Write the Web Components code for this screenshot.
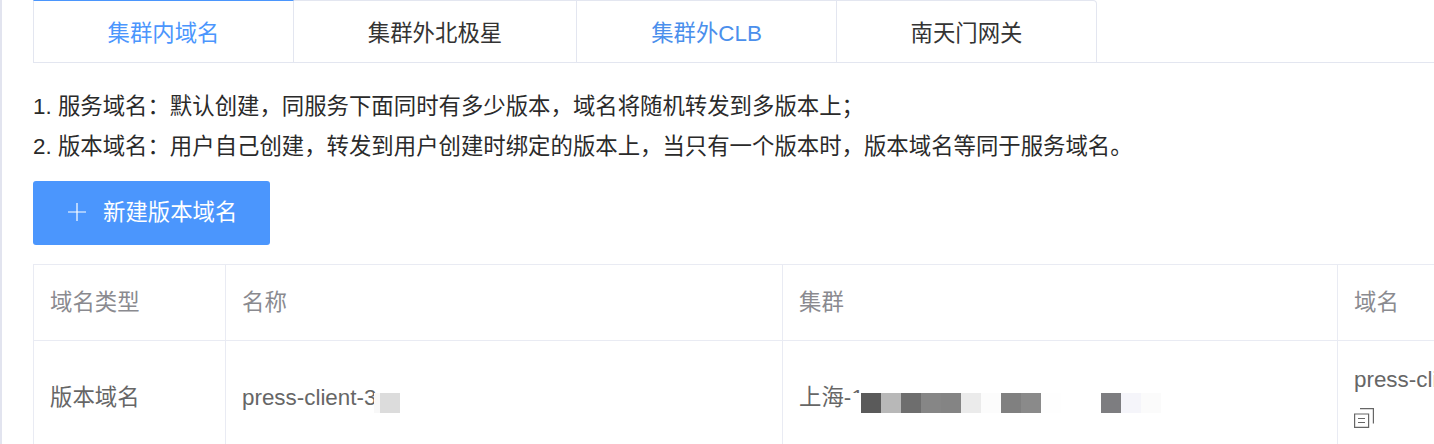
<!doctype html>
<html>
    <head>
        <title>版本域名</title>
        <style>
        html, body {
            margin: 0;
            height: 444px;
            overflow: hidden;
            background: #fff;
            font-family: "Liberation Sans", "Noto Sans CJK SC", sans-serif;
            color: #333;
        }
        </style>
    </head>
    <body>
        <domain-page>
            <domain-tabs>
                <tab-item active style="--w: 261px">集群内域名</tab-item>
                <tab-item style="--w: 283px">集群外北极星</tab-item>
                <tab-item blue style="--w: 260px">集群外CLB</tab-item>
                <tab-item style="--w: 260px">南天门网关</tab-item>
            </domain-tabs>
            <note-list>
                <div>1. 服务域名：默认创建，同服务下面同时有多少版本，域名将随机转发到多版本上；</div>
                <div>2. 版本域名：用户自己创建，转发到用户创建时绑定的版本上，当只有一个版本时，版本域名等同于服务域名。</div>
            </note-list>
            <add-button>新建版本域名</add-button>
            <domain-table></domain-table>
        </domain-page>

        <script>
            class DomainPage extends HTMLElement {
                constructor() {
                    super()
                    this.attachShadow({ mode: "open" }).innerHTML = `
                        <style>
                        :host {
                            display: flex;
                            flex-direction: column;
                            align-items: flex-start;
                            box-sizing: border-box;
                            width: 1434px;
                            height: 444px;
                            border-left: 2px solid #e2e4ef;
                            padding-left: 31px;
                            overflow: hidden;
                        }
                        ::slotted(*) {
                            flex: none;
                        }
                        </style>
                        <slot></slot>`
                }
            }

            class DomainTabs extends HTMLElement {
                constructor() {
                    super()
                    this.attachShadow({ mode: "open" }).innerHTML = `
                        <style>
                        :host {
                            display: flex;
                            box-sizing: border-box;
                            width: 1401px;
                            height: 63px;
                            border-bottom: 1px solid #e3e6f0;
                        }
                        </style>
                        <slot></slot>`
                }
            }

            class TabItem extends HTMLElement {
                constructor() {
                    super()
                    this.attachShadow({ mode: "open" }).innerHTML = `
                        <style>
                        :host {
                            display: flex;
                            align-items: center;
                            justify-content: center;
                            box-sizing: border-box;
                            width: var(--w);
                            height: 63px;
                            padding-bottom: 2px;
                            border-top: 1px solid #e3e6f0;
                            border-right: 1px solid #e3e6f0;
                            border-bottom: 1px solid #e3e6f0;
                            font-size: 22.4px;
                            color: #333;
                        }
                        :host(:first-child) {
                            border-left: 1px solid #e3e6f0;
                        }
                        :host(:last-child) {
                            border-top-right-radius: 4px;
                        }
                        :host([active]) {
                            border-top: 1px solid #4b96fd;
                            color: #4b96fd;
                        }
                        :host([blue]) {
                            color: #4b8fec;
                        }
                        </style>
                        <slot></slot>`
                }
            }

            class NoteList extends HTMLElement {
                constructor() {
                    super()
                    this.attachShadow({ mode: "open" }).innerHTML = `
                        <style>
                        :host {
                            display: block;
                            margin-top: 24px;
                            font-size: 22.4px;
                            line-height: 40px;
                            color: #2a2a2a;
                        }
                        </style>
                        <slot></slot>`
                }
            }

            class AddButton extends HTMLElement {
                constructor() {
                    super()
                    this.attachShadow({ mode: "open" }).innerHTML = `
                        <style>
                        :host {
                            display: flex;
                            align-items: center;
                            box-sizing: border-box;
                            width: 237px;
                            height: 64px;
                            margin-top: 14px;
                            padding: 0 0 2px 35px;
                            gap: 17px;
                            border-radius: 3px;
                            background: #4b96fd;
                            color: #fff;
                            font-size: 22.4px;
                        }
                        svg {
                            width: 18px;
                            height: 18px;
                            flex: none;
                        }
                        span {
                            margin-bottom: 4px;
                        }
                        </style>
                        <svg viewBox="0 0 18 18" fill="none" stroke="#fff" stroke-width="1.2"><path d="M9 0v18M0 9h18" /></svg>
                        <span><slot></slot></span>`
                }
            }

            class DomainTable extends HTMLElement {
                constructor() {
                    super()
                    // pixelated blur that hides the cluster name in the reference
                    const mosaic = ["#5a5a5a", "#b8b8b8", "#6e6e6e", "#868686", "#848484", "#ebebeb", "#fcfcfc", "#808080", "#8a8a8a", "#fefefe", "#fff", "#fff", "#7d7d80", "#f5f5fa", "#fbfbfb"]
                    const blocks = mosaic.map(c => `<i style="background:${c}"></i>`).join("")
                    this.attachShadow({ mode: "open" }).innerHTML = `
                        <style>
                        :host {
                            display: grid;
                            grid-template-columns: 192px 557px 555px 400px;
                            grid-template-rows: 76px 114px;
                            margin-top: 19px;
                            border-top: 1px solid #e9ebf3;
                            border-left: 1px solid #e9ebf3;
                            font-size: 22.4px;
                            color: #666;
                        }
                        .cell {
                            display: flex;
                            align-items: center;
                            box-sizing: border-box;
                            padding: 0 16px;
                            border-right: 1px solid #e9ebf3;
                            border-bottom: 1px solid #e9ebf3;
                            white-space: nowrap;
                            line-height: 36px;
                        }
                        .head {
                            color: #8a8a8f;
                        }
                        .text {
                            flex: none;
                        }
                        .mosaic {
                            display: flex;
                            flex: none;
                            align-self: flex-start;
                            margin-top: 52px;
                        }
                        .mosaic i {
                            display: block;
                            flex: none;
                            width: 20px;
                            height: 20px;
                        }
                        .stack {
                            flex-direction: column;
                            align-items: flex-start;
                            justify-content: center;
                            padding-bottom: 5px;
                        }
                        .stack svg {
                            display: block;
                            margin-top: 10px;
                        }
                        </style>
                        <div class="cell head">域名类型</div>
                        <div class="cell head">名称</div>
                        <div class="cell head">集群</div>
                        <div class="cell head">域名</div>
                        <div class="cell">版本域名</div>
                        <div class="cell"><span class="text" style="width: 132px">press-client-3</span><span class="mosaic"><i style="background:#f8f8f8;width:6px"></i><i style="background:#dcdcdc"></i></span></div>
                        <div class="cell"><span class="text" style="width: 52px">上海-1</span><span class="mosaic"><i style="background:#fff;width:10px"></i>${blocks}</span></div>
                        <div class="cell stack">
                            <div>press-client</div>
                            <svg width="20" height="20" viewBox="0 0 20 20" fill="none" stroke="#666" stroke-width="1.2"><path d="M.6 6h14v13.4H.6zM6 .6h13.4v15M4 10.5h7M4 14.5h7" /></svg>
                        </div>`
                }
            }

            customElements.define("domain-page", DomainPage)
            customElements.define("domain-tabs", DomainTabs)
            customElements.define("tab-item", TabItem)
            customElements.define("note-list", NoteList)
            customElements.define("add-button", AddButton)
            customElements.define("domain-table", DomainTable)
        </script>
    </body>
</html>
